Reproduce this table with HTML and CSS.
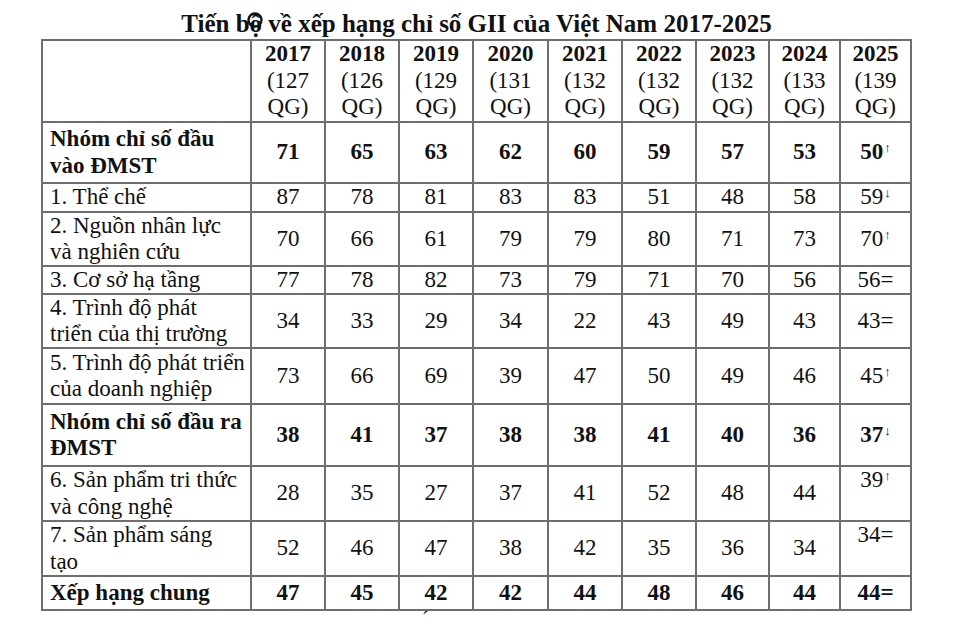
FILE: index.html
```html
<!DOCTYPE html>
<html lang="vi">
<head>
<meta charset="utf-8">
<title>GII Việt Nam 2017-2025</title>
<link rel="stylesheet" href="styles.css">
</head>
<body>
<div class="page">
  <h1 class="title">Tiến bộ về xếp hạng chỉ số GII của Việt Nam 2017-2025</h1>
  <svg class="marker" width="18" height="18" viewBox="0 0 18 18"><circle cx="9" cy="9" r="6.5" fill="none" stroke="#111" stroke-width="2.4"/></svg>
  <div class="grid">
    <div class="cell"></div>
    <div class="cell"><span><b>2017</b><br>(127<br>QG)</span></div>
    <div class="cell"><span><b>2018</b><br>(126<br>QG)</span></div>
    <div class="cell"><span><b>2019</b><br>(129<br>QG)</span></div>
    <div class="cell"><span><b>2020</b><br>(131<br>QG)</span></div>
    <div class="cell"><span><b>2021</b><br>(132<br>QG)</span></div>
    <div class="cell"><span><b>2022</b><br>(132<br>QG)</span></div>
    <div class="cell"><span><b>2023</b><br>(132<br>QG)</span></div>
    <div class="cell"><span><b>2024</b><br>(133<br>QG)</span></div>
    <div class="cell"><span><b>2025</b><br>(139<br>QG)</span></div>

    <div class="cell name bold"><span>Nhóm chỉ số đầu<br>vào ĐMST</span></div>
    <div class="cell bold">71</div><div class="cell bold">65</div><div class="cell bold">63</div><div class="cell bold">62</div><div class="cell bold">60</div><div class="cell bold">59</div><div class="cell bold">57</div><div class="cell bold">53</div><div class="cell bold"><span>50<sup class="arr">↑</sup></span></div>

    <div class="cell name">1. Thể chế</div>
    <div class="cell">87</div><div class="cell">78</div><div class="cell">81</div><div class="cell">83</div><div class="cell">83</div><div class="cell">51</div><div class="cell">48</div><div class="cell">58</div><div class="cell"><span>59<sup class="arr">↓</sup></span></div>

    <div class="cell name"><span>2. Nguồn nhân lực<br>và nghiên cứu</span></div>
    <div class="cell">70</div><div class="cell">66</div><div class="cell">61</div><div class="cell">79</div><div class="cell">79</div><div class="cell">80</div><div class="cell">71</div><div class="cell">73</div><div class="cell"><span>70<sup class="arr">↑</sup></span></div>

    <div class="cell name">3. Cơ sở hạ tầng</div>
    <div class="cell">77</div><div class="cell">78</div><div class="cell">82</div><div class="cell">73</div><div class="cell">79</div><div class="cell">71</div><div class="cell">70</div><div class="cell">56</div><div class="cell">56=</div>

    <div class="cell name"><span>4. Trình độ phát<br>triển của thị trường</span></div>
    <div class="cell">34</div><div class="cell">33</div><div class="cell">29</div><div class="cell">34</div><div class="cell">22</div><div class="cell">43</div><div class="cell">49</div><div class="cell">43</div><div class="cell">43=</div>

    <div class="cell name"><span>5. Trình độ phát triển<br>của doanh nghiệp</span></div>
    <div class="cell">73</div><div class="cell">66</div><div class="cell">69</div><div class="cell">39</div><div class="cell">47</div><div class="cell">50</div><div class="cell">49</div><div class="cell">46</div><div class="cell"><span>45<sup class="arr">↑</sup></span></div>

    <div class="cell name bold"><span>Nhóm chỉ số đầu ra<br>ĐMST</span></div>
    <div class="cell bold">38</div><div class="cell bold">41</div><div class="cell bold">37</div><div class="cell bold">38</div><div class="cell bold">38</div><div class="cell bold">41</div><div class="cell bold">40</div><div class="cell bold">36</div><div class="cell bold"><span>37<sup class="arr">↓</sup></span></div>

    <div class="cell name"><span>6. Sản phẩm tri thức<br>và công nghệ</span></div>
    <div class="cell">28</div><div class="cell">35</div><div class="cell">27</div><div class="cell">37</div><div class="cell">41</div><div class="cell">52</div><div class="cell">48</div><div class="cell">44</div><div class="cell top"><span>39<sup class="arr">↑</sup></span></div>

    <div class="cell name"><span>7. Sản phẩm sáng<br>tạo</span></div>
    <div class="cell">52</div><div class="cell">46</div><div class="cell">47</div><div class="cell">38</div><div class="cell">42</div><div class="cell">35</div><div class="cell">36</div><div class="cell">34</div><div class="cell top">34=</div>

    <div class="cell name bold">Xếp hạng chung</div>
    <div class="cell bold">47</div><div class="cell bold">45</div><div class="cell bold">42</div><div class="cell bold">42</div><div class="cell bold">44</div><div class="cell bold">48</div><div class="cell bold">46</div><div class="cell bold">44</div><div class="cell bold">44=</div>
  </div>
  <div class="after"><span class="accent">´</span></div>
</div>
</body>
</html>
```

FILE: styles.css
```css
html, body {
  margin: 0;
  padding: 0;
  background: #fff;
}
body {
  font-family: "Liberation Serif", "Times New Roman", serif;
  color: #111;
}
.page {
  position: relative;
  width: 871px;
  margin-left: 41px;
}
.title {
  margin: 10px 0 0 0;
  font-family: "Liberation Serif", "Times New Roman", serif;
  font-size: 25px;
  line-height: 28px;
  font-weight: bold;
  text-align: center;
}
.marker {
  position: absolute;
  left: 205px;
  top: 1px;
}
.grid {
  margin-top: 1px;
  display: grid;
  grid-template-columns: 209px 74px 74px 74px 75px 74px 74px 73px 71px 71px;
  grid-template-rows: 82px 61px 29px 54px 28px 54px 56px 62px 55px 55px 34px;
  border-top: 2px solid #6e6e6e;
  border-left: 2px solid #6e6e6e;
  width: 869px;
  font-family: "Liberation Serif", "Times New Roman", serif;
  font-size: 23px;
  line-height: 26.5px;
}
.cell {
  box-sizing: border-box;
  border-right: 2px solid #6e6e6e;
  border-bottom: 2px solid #6e6e6e;
  display: flex;
  align-items: center;
  justify-content: center;
  text-align: center;
  white-space: nowrap;
  font-family: "Liberation Serif", "Times New Roman", serif;
}
.cell.name {
  justify-content: flex-start;
  text-align: left;
  padding-left: 7px;
}
.cell.top {
  align-items: flex-start;
}
.bold {
  font-weight: bold;
}
.arr {
  font-size: 13px;
  font-weight: normal;
  vertical-align: 7px;
  line-height: 0;
  margin-left: 1px;
}
.after {
  margin-top: 6px;
  padding-left: 381px;
  font-size: 20px;
  line-height: 4px;
  height: 4px;
}
.accent {
  display: inline-block;
  height: 4px;
}
```
